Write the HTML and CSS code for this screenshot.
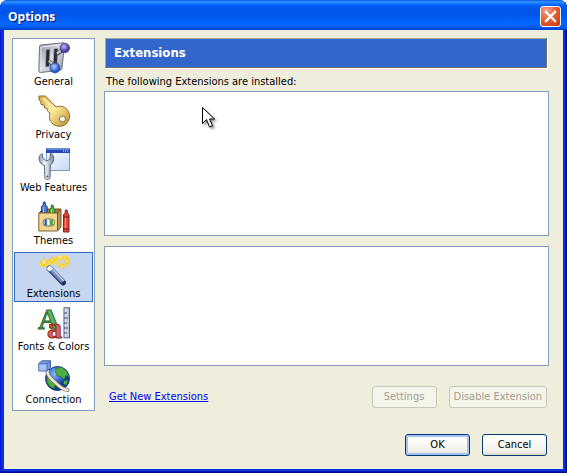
FILE: index.html
```html
<!DOCTYPE html>
<html lang="en">
<head>
  <meta charset="UTF-8">
  <meta name="viewport" content="width=device-width, initial-scale=1.0">
  <title>Options</title>
  <link rel="stylesheet" href="styles.css">
</head>
<body>
  <div class="window">
    <header class="titlebar">
      <h1>Options</h1>
      <button class="close" aria-label="Close">
        <svg width="21" height="21" viewBox="0 0 21 21"><path d="M6 6l9 9M15 6l-9 9" stroke="#fff" stroke-width="2.3" stroke-linecap="square"/></svg>
      </button>
    </header>

    <div class="client">
      <div class="main">
        <nav class="categories">
          <button class="category">
            <svg width="32" height="32" viewBox="0 0 32 32">
              <defs>
                <linearGradient id="plate" x1="0" y1="0" x2="1" y2="1"><stop offset="0" stop-color="#8b8f99"/><stop offset=".5" stop-color="#dcdee5"/><stop offset="1" stop-color="#8d909b"/></linearGradient>
                <radialGradient id="violet" cx=".4" cy=".35"><stop offset="0" stop-color="#c5b5f5"/><stop offset="1" stop-color="#4c3b9c"/></radialGradient>
                <radialGradient id="blue" cx=".4" cy=".35"><stop offset="0" stop-color="#b4d6ff"/><stop offset="1" stop-color="#2857c8"/></radialGradient>
              </defs>
              <path d="M3 3L25 .8q1.500 0 1.500 1.500L24 26q-.3 2-2 2.300L2.500 30.500Q.7 30.500.8 29L1.500 4.500Q1.600 3 3 3z" fill="url(#plate)" stroke="#6f727c"/>
              <path d="M3 28V5L24 2.500" fill="none" stroke="#f0f1f5"/>
              <path d="M8 7.500l4-.4-.6 17.500-4 .4zM16 6.700l4-.4-1 17.500-4 .4z" fill="#2c2d34" stroke="#a2a5ae" stroke-width=".7"/>
              <path d="M11 19l5.500 6M19 12l7-5" stroke="#55565d" stroke-width="4"/>
              <path d="M11 18.500l5.500 6M19 11.500l7-5" stroke="#c6c2bb" stroke-width="2.200"/>
              <circle cx="26.800" cy="6" r="4.800" fill="url(#violet)" stroke="#43347f" stroke-width=".7"/>
              <circle cx="17" cy="26" r="5" fill="url(#blue)" stroke="#244a9c" stroke-width=".7"/>
            </svg>
            <span>General</span>
          </button>
          <button class="category">
            <svg width="32" height="32" viewBox="0 0 32 32">
              <defs><linearGradient id="gold" x1="0" y1="0" x2="1" y2="1"><stop offset="0" stop-color="#d9a93c"/><stop offset=".45" stop-color="#fff0a5"/><stop offset="1" stop-color="#b98a1d"/></linearGradient></defs>
              <path d="M1 1h6.500L18 12c4-1.500 8-.8 11 2.500 4 4.500 3 11-1 14.500-4.500 3.500-11 3-14.500-1.500-2.500-3-2.500-6.500-1.500-9.500l-2.500-2-.5-2.500-2.500-.5-.3-3L3 9.500 2.800 6.500 1 5z" fill="url(#gold)" stroke="#8c6a25"/>
              <path d="M5 3l11 11" stroke="#fff6bd" stroke-width="1.500"/>
              <circle cx="24.500" cy="24" r="3" fill="#fff" stroke="#8c6a25"/>
            </svg>
            <span>Privacy</span>
          </button>
          <button class="category">
            <svg width="32" height="32" viewBox="0 0 32 32">
              <defs>
                <linearGradient id="pane" x1="0" y1="0" x2="1" y2="1"><stop offset="0" stop-color="#fff"/><stop offset="1" stop-color="#c3d8f6"/></linearGradient>
                <linearGradient id="steel" x1="0" y1="0" x2="1" y2="0"><stop offset="0" stop-color="#8998ad"/><stop offset=".4" stop-color="#f2f6fb"/><stop offset="1" stop-color="#7888a0"/></linearGradient>
              </defs>
              <rect x="8.500" y="1" width="23" height="21.500" fill="url(#pane)" stroke="#7f9bcb"/>
              <rect x="8" y=".5" width="24" height="4.500" fill="#2347b5"/>
              <path d="M9 1.500h22" stroke="#6286e2"/>
              <path d="M25 3h1M27 3h1M29 3h1" stroke="#fff"/>
              <path d="M4 5.500L1.500 8c-1.200 4 .3 8 5 9.500l.3 12c.2 2.700 5 2.700 5.200 0L12.300 17c3-1.500 4.200-5.500 2.700-9.500l-2.500-2.800-.6 6.300-3 2L5.300 11z" fill="url(#steel)" stroke="#56657c"/>
              <circle cx="9.400" cy="28.500" r="1" fill="#52617a"/>
            </svg>
            <span>Web Features</span>
          </button>
          <button class="category">
            <svg width="32" height="32" viewBox="0 0 32 32">
              <path d="M1 12l4-4h18l-4 4z" fill="#a07a3f" stroke="#735426"/>
              <path d="M3.500 12V5.500L5 4.500 5.500 1h1.500l.7 3.500 1.500 1V12z" fill="#537bcc" stroke="#263f80"/>
              <path d="M5.500 6v6" stroke="#9dbcf0"/>
              <path d="M11.500 12V8.500L13 7.500l.5-3.500H15l.7 3.500 1.300 1V12z" fill="#52b847" stroke="#27732c"/>
              <path d="M13.500 9v3" stroke="#a3e598"/>
              <path d="M.8 12h18.700v18H.8z" fill="#ecd692" stroke="#806331"/>
              <path d="M19.500 12L23 8v18l-3.500 4z" fill="#ba944e" stroke="#735426"/>
              <rect x="5" y="18" width="11.500" height="7" rx="3.500" fill="#fff" stroke="#806331"/>
              <path d="M6.500 18.500H9v6H6.500z" fill="#3e64b4"/><path d="M11.500 18.500h3.500v6h-3.500z" fill="#4fae45"/>
              <path d="M25.500 31V13.500L27 12.500l.5-3.500H29l.8 3.500 1.200 1V31z" fill="#d94838" stroke="#85251f"/>
              <path d="M25.500 16h5.500M25.500 28h5.500" stroke="#761b1b"/>
              <path d="M27.500 17v10" stroke="#f6a08f"/>
            </svg>
            <span>Themes</span>
          </button>
          <button class="category selected" aria-current="page">
            <svg width="32" height="32" viewBox="0 0 32 32">
              <path d="M2 10c5 3 9-2 13-2 5 0 8 6 13 3 5-4 1-9-4-8-4 1-7 4-12 3" fill="none" stroke="#ffd83a" stroke-width="4" stroke-dasharray="3 1"/>
              <path d="M6 3l1.300 3.500L11 8l-3.700 1.300L6 13 4.700 9.300 1 8l3.700-1.500zM14 2l1 2.500L18 6l-3 1.200L14 10l-1.200-2.800L10 6l2.800-1.500zM22 0L23.200 2 26 3.200 23.200 4.500 22 7.500l-1.200-3L18 3.200 20.800 2zM29 3l1 3 2 1-2 1-1 3-1-3-3-1 3-1zM24 8.500l1 2.500 2.500 1-2.500 1-1 3-1-3-3-1 3-1z" fill="#ffc400"/>
              <path d="M6 6v4M4 8h4M14 5v2M13 6h2M22 1v4M20 3.200h4M29 6v2M28 7h2M24 11v2M23 12h2" stroke="#fff" stroke-width=".9"/>
              <path d="M11.500 14.500l13.500 14" stroke="#33446f" stroke-width="6" stroke-linecap="round"/>
              <path d="M11.500 14l13.500 14" stroke="#7890c1" stroke-width="3.500"/>
              <path d="M12.500 13l13.500 14" stroke="#c8d6ef" stroke-width="1.200"/>
              <path d="M10 13l3 3" stroke="#fff" stroke-width="4.500"/>
              <ellipse cx="25.500" cy="29" rx="2.300" ry="1.500" fill="#222f5c" transform="rotate(-45 25.500 29)"/>
            </svg>
            <span>Extensions</span>
          </button>
          <button class="category">
            <svg width="32" height="32" viewBox="0 0 32 32">
              <defs><linearGradient id="ruler" x1="0" y1="0" x2="1" y2="0"><stop offset="0" stop-color="#eef1fa"/><stop offset="1" stop-color="#aeb9d6"/></linearGradient></defs>
              <text x="0" y="22" class="glyph-upper">A</text>
              <text x="9" y="31" class="glyph-lower">a</text>
              <rect x="26" y=".8" width="5.500" height="30" fill="url(#ruler)" stroke="#4e5a7c"/>
              <path d="M26 6h3M26 11h4M26 16h3M26 21h4M26 26h3" stroke="#3d486a"/>
            </svg>
            <span>Fonts &amp; Colors</span>
          </button>
          <button class="category">
            <svg width="32" height="32" viewBox="0 0 32 32">
              <defs><radialGradient id="globe" cx=".4" cy=".3"><stop offset="0" stop-color="#94c1ff"/><stop offset=".55" stop-color="#3c72d8"/><stop offset="1" stop-color="#183982"/></radialGradient></defs>
              <circle cx="19.500" cy="18.500" r="12" fill="url(#globe)" stroke="#213f7e"/>
              <path d="M18 8.500l6-1 5 4 1.500 5-2.500-1-2 4-3-3-4-.5-1.500-4zM9 18l4 1 5 4.500-2 5-4-2-3-4z" fill="#4eae3f" stroke="#28722d" stroke-width=".7"/>
              <path d="M26 21l4-1-1.500 5-3-1z" fill="#4eae3f"/>
              <path d="M9.500 9.500c-1 5 2 8 5.500 11 5 4 8 9 14.500 9.500" fill="none" stroke="#817b68" stroke-width="4" stroke-linecap="round"/>
              <path d="M9.500 9.500c-1 5 2 8 5.500 11 5 4 8 9 14.500 9.500" fill="none" stroke="#ede8d5" stroke-width="2.500" stroke-linecap="round"/>
              <path d="M.8 3.500L4 .8h8.500v6.500L9 11H.8z" fill="#799de0" stroke="#4260a5"/>
              <path d="M1.300 3.800h7.700v6.700H1.300z" fill="#a8c4f5"/>
              <path d="M1 3.800h8L12.500 1M9 3.800v7" fill="none" stroke="#4260a5" stroke-width=".8"/>
            </svg>
            <span>Connection</span>
          </button>
        </nav>

        <section class="panel">
          <h2>Extensions</h2>
          <p id="list-label">The following Extensions are installed:</p>
          <div class="box list" role="listbox" aria-labelledby="list-label" tabindex="0"></div>
          <div class="box details"></div>
          <div class="actions">
            <a href="#">Get New Extensions</a>
            <button class="btn" disabled>Settings</button>
            <button class="btn" disabled>Disable Extension</button>
          </div>
        </section>
      </div>

      <footer class="buttons">
        <button class="btn default">OK</button>
        <button class="btn">Cancel</button>
      </footer>
    </div>
  </div>

  <svg class="cursor" width="17" height="24" viewBox="0 0 17 24">
    <path d="M.5.500v16l4-4 3 7.500 3-1.200-3-6.800h5z" fill="#fff" stroke="#000"/>
  </svg>
</body>
</html>
```
FILE: styles.css
```css
* {
  box-sizing: border-box;
}
body {
  margin: 0;
  background: #fff;
  color: #000;
  font: 11px/16px "DejaVu Sans Condensed", "DejaVu Sans", sans-serif;
}
button {
  font: inherit;
  color: inherit;
}
h1, h2, p {
  margin: 0;
}
.window {
  display: flex;
  flex-direction: column;
  min-height: 100vh;
  padding: 0 4px 4px;
  background: #0831d9;
  border-radius: 8px 8px 0 0;
  box-shadow: inset 1px 0 #0019cf, inset -1px -1px #001088, inset -2px -2px #0015b5, inset -3px -3px #0038e8;
  overflow: hidden;
}
.titlebar {
  display: flex;
  align-items: center;
  justify-content: space-between;
  height: 30px;
  margin: 0 -4px;
  padding: 2px 6px 0 8px;
  background: linear-gradient(#0058e6 0, #3a93ff 2px, #0372ff 4px, #0058ee 6px, #0054e8 14px, #0062fa 20px, #0066ff 25px, #005bf0 27px, #0040c8 30px);
}
h1 {
  padding-top: 2px;
  color: #fff;
  font: bold 12px/18px "Open Sans", sans-serif;
  text-shadow: 1px 1px #0a1883;
}
.close {
  width: 21px;
  height: 21px;
  padding: 0;
  border: 1px solid #fff;
  border-radius: 3px;
  background: radial-gradient(circle at 30% 20%, #f0a088, #e35a31 50%, #c8390e);
}
.close svg {
  display: block;
  margin: -1px;
}
.client {
  flex: 1;
  display: flex;
  flex-direction: column;
  gap: 23px;
  padding: 8px 14px 13px 8px;
  background: #efeddc;
}
.main {
  flex: 1;
  display: flex;
  gap: 9px;
}
.categories {
  display: flex;
  flex-direction: column;
  gap: 3px;
  width: 83px;
  padding: 1px;
  border: 1px solid #7f9db9;
  background: #fff;
}
.category {
  display: flex;
  flex-direction: column;
  align-items: center;
  height: 50px;
  padding: 1px 0 0;
  border: 1px solid transparent;
  background: none;
  white-space: nowrap;
}
.category svg {
  flex: none;
  overflow: visible;
}
.selected {
  border-color: #316ac5;
  background: #c6d5f0;
}
.glyph-upper {
  font: bold 30px "Liberation Serif", serif;
  fill: #61b359;
  stroke: #286b30;
}
.glyph-lower {
  font: bold 30px "Liberation Serif", serif;
  fill: #e66050;
  stroke: #932d28;
}
.panel {
  flex: 1;
  display: flex;
  flex-direction: column;
}
h2 {
  margin: 0 2px 0 1px;
  padding: 5px 8px;
  border: 1px solid;
  border-color: #aca899 #716f64 #716f64 #aca899;
  box-shadow: 1px 1px #fff;
  background: #3366cc;
  color: #fff;
  font: bold 13px/18px "DejaVu Sans Condensed", "DejaVu Sans", sans-serif;
}
p {
  padding: 6px 2px 1px;
}
.box {
  border: 1px solid #7f9db9;
  background: #fff;
}
.list {
  flex: 145 0 0;
}
.details {
  flex: 120 0 0;
  margin-top: 10px;
}
.actions {
  display: flex;
  align-items: center;
  gap: 12px;
  padding: 20px 2px 3px 5px;
}
a {
  margin-right: auto;
  color: #0000ee;
}
.btn {
  min-width: 65px;
  height: 22px;
  padding: 0 4px;
  border: 1px solid #003c74;
  border-radius: 3px;
  background: linear-gradient(#fff, #f3f2ea 80%, #dcd8cb);
}
.btn:disabled {
  border-color: #c9c7ba;
  background: #f5f4ea;
  color: #a1a192;
}
.default {
  box-shadow: inset 0 0 0 2px #a6c1f5;
}
.buttons {
  display: flex;
  justify-content: flex-end;
  gap: 12px;
  padding-right: 2px;
}
.cursor {
  position: absolute;
  left: 202px;
  top: 107px;
  filter: drop-shadow(2px 2px 1px rgba(0, 0, 0, 0.4));
  pointer-events: none;
}
```
